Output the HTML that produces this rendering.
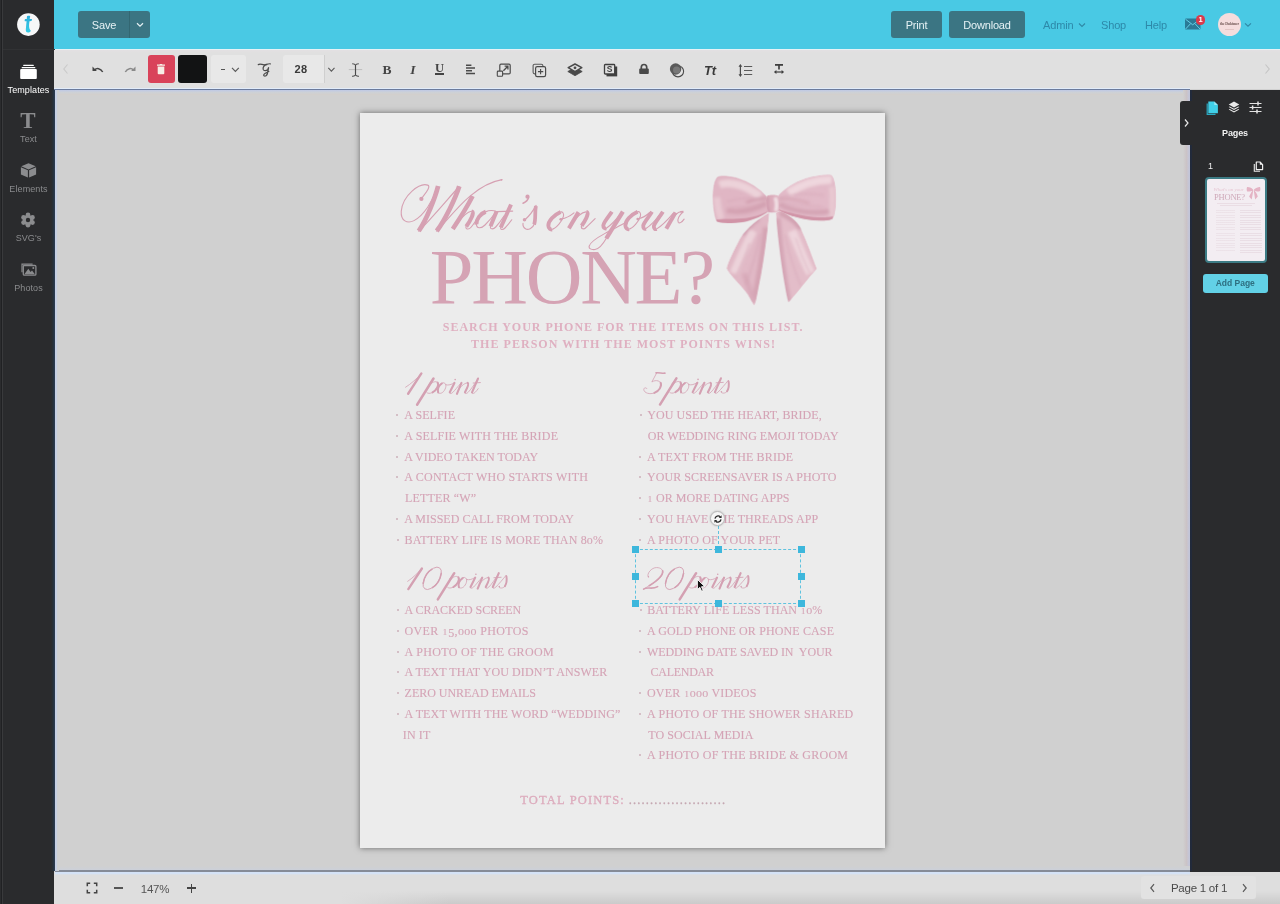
<!DOCTYPE html>
<html>
<head>
<meta charset="utf-8">
<title>Editor</title>
<style>
*{box-sizing:border-box;margin:0;padding:0}
html,body{width:1280px;height:904px;overflow:hidden;background:#d0d0d0;font-family:"Liberation Sans",sans-serif;}
.abs{position:absolute}
#side{position:absolute;left:0;top:0;width:54px;height:904px;background:#2a2b2d;}
#side .edge{position:absolute;left:0;top:0;width:4px;height:904px;background:linear-gradient(to right,#2b2c2e 1px,#202123 1px,#202123 2px,#3a3b3d 2px,#38393b 3px,#2a2b2d 3.500px)}
#side .sep{position:absolute;left:3px;top:49px;width:52px;height:1px;background:#313234}
.sitem{position:absolute;left:0;width:57px;text-align:center;font-size:9px;line-height:11px;color:#8a8b8d;letter-spacing:0.1px}
.sitem.on{color:#fff}
#top{position:absolute;left:54px;top:0;width:1226px;height:49px;background:#49c9e4}
#tool{position:absolute;left:54px;top:49px;width:1226px;height:40px;background:linear-gradient(#e6f2f5 1px,#e3e0e2 1px,#e0e0e0 4px)}
#toolline{position:absolute;left:54px;top:88px;width:1136px;height:2px;background:linear-gradient(#e2ecfa 1px,#6b7b9d 1px)}
#toolglow{position:absolute;left:55px;top:90px;width:1135px;height:6px;background:linear-gradient(#bfc9e5,#cdd1d6 40%,#d2cfcd 75%,#d0d0d0)}
#canvas{position:absolute;left:55px;top:90px;width:1135px;height:782px;background:#d0d0d0}
#leftline{position:absolute;left:51px;top:90px;width:8px;height:781px;background:linear-gradient(to right,#2a2b2d,#25303a 2px,#2b3d55 4px,#c5cfe3 4px,#c5cfe3 5.5px,#cdd0d2 6.500px,#d0d0d0 8px)}
#right{position:absolute;left:1190px;top:90px;width:90px;height:782px;background:#2a2b2d}
#rightline{position:absolute;left:1183px;top:90px;width:9px;height:781px;background:linear-gradient(to right,#d0d0d0,#cbc3c6 3.5px,#c4c6d8 6px,#c0c4da 7px,#212a3c 7px,#222a3a 8.5px,#2a2b2d 9px)}
#bottom{position:absolute;left:54px;top:872px;width:1226px;height:32px;background:#dedede}
#botline{position:absolute;left:55px;top:866px;width:1135px;height:6px;background:linear-gradient(#d0d0d0,#ccd0d9 4px,#858b97 4px,#858b97 5.5px,#aab3c4 6px)}
#botglow{position:absolute;left:55px;top:872px;width:1135px;height:3px;background:linear-gradient(#d4e2f6 1.5px,#dedede);z-index:2}
#side,#top,#tool,#right,#bottom,#page{will-change:transform}
#page{position:absolute;left:360px;top:113px;width:525px;height:735px;background:#ececec;box-shadow:0 0 6px rgba(0,0,0,.5)}
.btn{position:absolute;background:#3b7583;color:#e6f2f5;border-radius:3px;font-size:11px;text-align:center;letter-spacing:-.2px}
.nav{position:absolute;color:#2d89a9;font-size:11px;line-height:13px;letter-spacing:-.15px}
.t{position:absolute;white-space:pre;line-height:normal}
.li{font:12px "Liberation Serif",serif;color:#d5a4b6;-webkit-text-stroke:.12px #d5a4b6}
.sub{font:bold 12px "Liberation Serif",serif;color:#dfb0c1}
.big{font:78.500px "Liberation Serif",serif;color:#d5a3b4}
.sc{font:italic 27px "Liberation Serif",serif;color:#d7a2b4;transform:skewX(-14deg);transform-origin:0 75%}
.bu{position:absolute;width:2px;height:2px;background:#cdb0ba;border-radius:1px}
.hd{position:absolute;width:7px;height:7px;background:#3db7dc}
</style>
</head>
<body>
<div id="canvas"></div>
<div id="toolglow"></div>
<div id="page">
<!--LINES-START-->
<div class="t li" style="left:44.3px;top:295.3px;letter-spacing:0.051px">A SELFIE</div>
<i class="bu" style="left:36px;top:301px"></i>
<div class="t li" style="left:44.3px;top:316.0px;letter-spacing:0.188px">A SELFIE WITH THE BRIDE</div>
<i class="bu" style="left:36px;top:322px"></i>
<div class="t li" style="left:44.3px;top:336.7px;letter-spacing:-0.009px">A VIDEO TAKEN TODAY</div>
<i class="bu" style="left:36px;top:343px"></i>
<div class="t li" style="left:44.3px;top:357.4px;letter-spacing:0.236px">A CONTACT WHO STARTS WITH</div>
<i class="bu" style="left:36px;top:363px"></i>
<div class="t li" style="left:45.0px;top:378.1px;letter-spacing:0.151px">LETTER “W”</div>
<div class="t li" style="left:44.3px;top:398.8px;letter-spacing:0.010px">A MISSED CALL FROM TODAY</div>
<i class="bu" style="left:36px;top:405px"></i>
<div class="t li" style="left:44.6px;top:419.5px;letter-spacing:0.169px">BATTERY LIFE IS MORE THAN 8o%</div>
<i class="bu" style="left:37px;top:426px"></i>
<div class="t li" style="left:287.3px;top:295.3px;letter-spacing:0.063px">YOU USED THE HEART, BRIDE,</div>
<i class="bu" style="left:280px;top:301px"></i>
<div class="t li" style="left:287.8px;top:316.0px;letter-spacing:-0.004px">OR WEDDING RING EMOJI TODAY</div>
<div class="t li" style="left:287.0px;top:336.7px;letter-spacing:0.142px">A TEXT FROM THE BRIDE</div>
<i class="bu" style="left:279px;top:343px"></i>
<div class="t li" style="left:287.0px;top:357.4px;letter-spacing:0.069px">YOUR SCREENSAVER IS A PHOTO</div>
<i class="bu" style="left:279px;top:363px"></i>
<div class="t li" style="left:287.0px;top:378.1px;letter-spacing:0.023px"><span style="font-size:8.700px;padding:0 .85px">1</span> OR MORE DATING APPS</div>
<i class="bu" style="left:279px;top:384px"></i>
<div class="t li" style="left:287.0px;top:398.8px;letter-spacing:0.080px">YOU HAVE THE THREADS APP</div>
<i class="bu" style="left:279px;top:405px"></i>
<div class="t li" style="left:287.0px;top:419.5px;letter-spacing:0.170px">A PHOTO OF YOUR PET</div>
<i class="bu" style="left:279px;top:426px"></i>
<div class="t li" style="left:44.6px;top:490.3px;letter-spacing:-0.044px">A CRACKED SCREEN</div>
<i class="bu" style="left:37px;top:496px"></i>
<div class="t li" style="left:44.6px;top:511.0px;letter-spacing:0.328px">OVER <span style="font-size:8.700px;padding:0 .85px">1</span><span style="position:relative;top:2.200px">5</span>,ooo PHOTOS</div>
<i class="bu" style="left:37px;top:517px"></i>
<div class="t li" style="left:44.6px;top:531.7px;letter-spacing:0.320px">A PHOTO OF THE GROOM</div>
<i class="bu" style="left:37px;top:538px"></i>
<div class="t li" style="left:44.6px;top:552.4px;letter-spacing:0.092px">A TEXT THAT YOU DIDN’T ANSWER</div>
<i class="bu" style="left:37px;top:558px"></i>
<div class="t li" style="left:44.6px;top:573.1px;letter-spacing:-0.035px">ZERO UNREAD EMAILS</div>
<i class="bu" style="left:37px;top:579px"></i>
<div class="t li" style="left:44.6px;top:593.8px;letter-spacing:0.136px">A TEXT WITH THE WORD “WEDDING”</div>
<i class="bu" style="left:37px;top:600px"></i>
<div class="t li" style="left:42.8px;top:614.5px;letter-spacing:0.125px">IN IT</div>
<div class="t li" style="left:287.3px;top:490.3px;letter-spacing:0.066px">BATTERY LIFE LESS THAN <span style="font-size:8.700px;padding:0 .85px">1</span>o%</div>
<i class="bu" style="left:280px;top:496px"></i>
<div class="t li" style="left:287.0px;top:511.0px;letter-spacing:0.133px">A GOLD PHONE OR PHONE CASE</div>
<i class="bu" style="left:279px;top:517px"></i>
<div class="t li" style="left:287.0px;top:531.7px;letter-spacing:-0.079px">WEDDING DATE SAVED IN  YOUR</div>
<i class="bu" style="left:279px;top:538px"></i>
<div class="t li" style="left:290.6px;top:552.4px;letter-spacing:-0.292px">CALENDAR</div>
<div class="t li" style="left:287.0px;top:573.1px;letter-spacing:0.190px">OVER <span style="font-size:8.700px;padding:0 .85px">1</span>ooo VIDEOS</div>
<i class="bu" style="left:279px;top:579px"></i>
<div class="t li" style="left:287.0px;top:593.8px;letter-spacing:0.236px">A PHOTO OF THE SHOWER SHARED</div>
<i class="bu" style="left:279px;top:600px"></i>
<div class="t li" style="left:288.2px;top:614.5px;letter-spacing:0.079px">TO SOCIAL MEDIA</div>
<div class="t li" style="left:287.0px;top:635.2px;letter-spacing:0.250px">A PHOTO OF THE BRIDE &amp; GROOM</div>
<i class="bu" style="left:279px;top:641px"></i>
<div class="t sub" style="left:82.8px;top:206.7px;letter-spacing:0.979px">SEARCH YOUR PHONE FOR THE ITEMS ON THIS LIST.</div>
<div class="t sub" style="left:111.0px;top:223.8px;letter-spacing:1.041px">THE PERSON WITH THE MOST POINTS WINS!</div>
<div class="t sub" style="left:160.300px;top:680.100px;letter-spacing:1.160px;font:12.500px 'Liberation Serif',serif;-webkit-text-stroke:.35px #ddadbe;color:#ddadbe">TOTAL POINTS:</div>
<div class="t sub" style="left:268.800px;top:680.100px;letter-spacing:1.115px;font:12.500px 'Liberation Serif',serif;-webkit-text-stroke:.3px #c4a6b0;color:#c4a6b0">.......................</div>
<div class="t big" style="left:69.700px;top:118.800px;letter-spacing:-2.200px">PHONE?</div>
<!--LINES-END-->
<svg class="abs" id="ttl" style="left:35px;top:57px" width="300" height="90" viewBox="0 0 2400 720" fill="none" stroke="#d6a0b2" stroke-linecap="round" stroke-linejoin="round">
<circle cx="211" cy="231" r="17" fill="#d6a0b2" stroke="none"/>
<path d="M214 226C235 196 292 132 262 121C198 100 62 200 50 330C44 408 100 432 152 405C232 364 300 250 340 138" stroke-width="9"/>
<path d="M345 128C322 220 252 400 190 488" stroke-width="38" stroke-linecap="butt"/>
<path d="M190 490C300 380 430 222 512 134" stroke-width="9"/>
<path d="M514 130C482 230 400 400 334 488" stroke-width="38" stroke-linecap="butt"/>
<path d="M334 490C450 370 620 118 856 77" stroke-width="9"/>
<circle cx="852" cy="78" r="7" fill="#d6a0b2" stroke="none"/>
<path d="M621 208C580 290 510 400 462 472" stroke-width="36" stroke-linecap="butt"/>
<path d="M500 425C530 385 580 335 612 330" stroke-width="9"/>
<path d="M612 331C642 338 600 410 570 452" stroke-width="32" stroke-linecap="butt"/>
<path d="M568 448C562 478 590 480 610 456C630 432 650 400 668 378" stroke-width="9"/>
<path d="M726 334C684 348 648 395 651 436" stroke-width="32" stroke-linecap="butt"/>
<path d="M812 333C782 320 752 322 724 335M651 432C652 472 690 470 720 440C760 400 790 360 810 332" stroke-width="9"/>
<path d="M813 330L764 450" stroke-width="32" stroke-linecap="butt"/>
<path d="M764 446C757 476 785 478 806 456C830 430 850 402 872 368" stroke-width="9"/>
<path d="M928 276L846 460" stroke-width="32" stroke-linecap="butt"/>
<path d="M846 456C840 482 862 482 882 462C902 442 918 420 934 398" stroke-width="9"/>
<path d="M812 333L941 329" stroke-width="10"/>
<circle cx="1060" cy="213" r="17" fill="#d6a0b2" stroke="none"/>
<path d="M1068 222C1062 245 1042 258 1024 266" stroke-width="12"/>
<circle cx="1036" cy="398" r="14" fill="#d6a0b2" stroke="none"/>
<path d="M1038 400C1072 370 1106 325 1129 283" stroke-width="9"/>
<path d="M1127 288C1117 340 1128 398 1113 436" stroke-width="30" stroke-linecap="butt"/>
<path d="M1114 432C1102 470 1062 482 1044 470C1028 460 1022 442 1024 426" stroke-width="9"/>
<path d="M1325 336C1270 360 1225 410 1227 446C1228 470 1245 478 1256 475" stroke-width="31" stroke-linecap="butt"/>
<path d="M1254 476C1286 470 1340 410 1348 369C1352 345 1340 332 1324 336" stroke-width="9"/>
<circle cx="1326" cy="394" r="11" fill="#d6a0b2" stroke="none"/>
<path d="M1330 392C1370 385 1405 365 1432 343" stroke-width="9"/>
<path d="M1468 337L1391 467" stroke-width="32" stroke-linecap="butt"/>
<path d="M1420 425C1450 380 1495 340 1528 335" stroke-width="9"/>
<path d="M1530 335C1562 343 1512 420 1493 446" stroke-width="32" stroke-linecap="butt"/>
<path d="M1492 442C1485 476 1510 479 1530 458C1555 435 1580 410 1601 389" stroke-width="9"/>
<path d="M1735 334C1710 372 1670 416 1667 441C1665 462 1678 470 1690 467" stroke-width="31" stroke-linecap="butt"/>
<path d="M1688 468C1730 440 1775 390 1809 345" stroke-width="9"/>
<path d="M1823 333L1690 548" stroke-width="34" stroke-linecap="butt"/>
<path d="M1692 544C1660 600 1630 632 1600 636C1570 640 1548 628 1554 608C1562 580 1620 540 1677 509C1720 485 1760 468 1792 448C1812 438 1828 430 1840 424" stroke-width="9"/>
<path d="M1941 334C1886 358 1841 408 1843 444C1844 468 1861 476 1872 473" stroke-width="31" stroke-linecap="butt"/>
<path d="M1870 474C1902 468 1956 408 1964 367C1968 343 1956 330 1940 334" stroke-width="9"/>
<circle cx="1942" cy="392" r="11" fill="#d6a0b2" stroke="none"/>
<path d="M1946 390C1986 383 2015 362 2037 340" stroke-width="9"/>
<path d="M2056 334C2030 376 1990 420 1986 444C1984 466 1996 473 2007 469" stroke-width="31" stroke-linecap="butt"/>
<path d="M2005 470C2045 445 2095 390 2132 340" stroke-width="9"/>
<path d="M2143 334C2118 376 2075 425 2071 449C2069 470 2082 476 2093 472" stroke-width="31" stroke-linecap="butt"/>
<path d="M2091 473C2130 450 2185 395 2227 345" stroke-width="9"/>
<path d="M2244 340L2170 470" stroke-width="32" stroke-linecap="butt"/>
<path d="M2205 402C2230 370 2262 338 2284 334" stroke-width="9"/>
<path d="M2282 335L2308 334" stroke-width="15" stroke-linecap="butt"/>
<path d="M2302 338C2276 360 2254 396 2266 418C2275 432 2298 415 2313 393" stroke-width="9"/>
</svg>
<svg class="abs" id="bow" style="left:340px;top:47px;filter:saturate(.9) brightness(.985)" width="150" height="160" viewBox="0 0 848 904">
<defs>
<clipPath id="cLT"><path d="M388 298C340 325 262 385 225 445 190 515 160 570 150 612 165 648 215 690 268 758 285 785 298 810 306 822 318 805 326 740 345 650 362 560 378 440 392 300z"/></clipPath><clipPath id="cRT"><path d="M428 298C436 400 452 550 478 700 488 760 495 790 500 806 535 770 590 700 622 660 640 640 655 625 662 614 640 560 610 470 570 385 545 340 500 305 448 288z"/></clipPath>
<clipPath id="cLL"><path d="M378 205C340 160 280 120 205 97 160 88 118 84 100 92 80 105 72 150 70 200 70 260 78 320 92 348 120 362 190 358 250 350 310 338 360 312 388 290z"/></clipPath><clipPath id="cRL"><path d="M438 205C470 165 530 125 600 102 660 85 715 78 742 84 762 100 768 150 770 210 770 270 762 318 750 332 720 348 650 345 600 336 540 325 480 305 446 286z"/></clipPath><clipPath id="cKN"><path d="M375 205C385 195 430 192 442 204 450 230 452 265 446 290 432 300 398 300 384 294 374 270 370 230 375 205z"/></clipPath>
<filter id="bl" x="-20%" y="-20%" width="140%" height="140%"><feGaussianBlur stdDeviation="10"/></filter>
<filter id="bm" x="-20%" y="-20%" width="140%" height="140%"><feGaussianBlur stdDeviation="5"/></filter>
<filter id="bs" x="-5%" y="-5%" width="110%" height="110%"><feGaussianBlur stdDeviation="2.2"/></filter>
</defs>
<g filter="url(#bs)">
<g clip-path="url(#cLT)"><path d="M388 298C340 325 262 385 225 445 190 515 160 570 150 612 165 648 215 690 268 758 285 785 298 810 306 822 318 805 326 740 345 650 362 560 378 440 392 300z" fill="#e8bbc9"/><g filter="url(#bl)">
<path d="M300 400C255 490 215 580 190 640" stroke="#f3d6de" stroke-width="46" fill="none"/>
<path d="M372 380C355 520 330 680 305 800" stroke="#dba4b6" stroke-width="30" fill="none"/>
<path d="M330 330C300 350 270 380 240 420" stroke="#d79fb2" stroke-width="30" fill="none"/>
<path d="M250 640C270 700 290 760 305 810" stroke="#e0acbd" stroke-width="30" fill="none"/></g>
<g filter="url(#bm)" opacity=".55"><path d="M340 420C320 520 290 620 260 700M280 470C260 540 230 600 205 650" stroke="#d9a1b4" stroke-width="7" fill="none"/></g></g>
<g clip-path="url(#cRT)"><path d="M428 298C436 400 452 550 478 700 488 760 495 790 500 806 535 770 590 700 622 660 640 640 655 625 662 614 640 560 610 470 570 385 545 340 500 305 448 288z" fill="#eabfcc"/><g filter="url(#bl)">
<path d="M520 400C560 500 595 580 625 640" stroke="#f4d8e0" stroke-width="50" fill="none"/>
<path d="M440 330C452 500 476 680 500 800" stroke="#dca6b8" stroke-width="30" fill="none"/>
<path d="M450 300C500 320 540 350 570 390" stroke="#d9a2b4" stroke-width="26" fill="none"/></g>
<g filter="url(#bm)" opacity=".5"><path d="M480 420C505 540 540 640 570 710M540 440C565 520 595 590 620 640" stroke="#dba5b7" stroke-width="7" fill="none"/></g></g>
<g clip-path="url(#cLL)"><path d="M378 205C340 160 280 120 205 97 160 88 118 84 100 92 80 105 72 150 70 200 70 260 78 320 92 348 120 362 190 358 250 350 310 338 360 312 388 290z" fill="#e7b8c7"/><g filter="url(#bl)">
<path d="M110 140C170 115 260 145 340 205" stroke="#f3d5dd" stroke-width="44" fill="none"/>
<path d="M95 210C100 270 110 310 120 335" stroke="#efcbd5" stroke-width="40" fill="none"/>
<path d="M150 285C220 300 300 285 375 245" stroke="#dba3b5" stroke-width="30" fill="none"/>
<path d="M380 215C340 215 300 225 260 240" stroke="#d99fb2" stroke-width="16" fill="none"/></g>
<path d="M92 336C130 331 200 334 260 328 320 321 360 301 388 288L394 300C360 325 320 345 255 354 190 362 125 364 94 350z" fill="#d995aa"/>
<g filter="url(#bm)" opacity=".6"><path d="M370 225C300 210 220 215 150 235M370 250C310 262 240 270 170 268" stroke="#dca6b7" stroke-width="6" fill="none"/></g></g>
<g clip-path="url(#cRL)"><path d="M438 205C470 165 530 125 600 102 660 85 715 78 742 84 762 100 768 150 770 210 770 270 762 318 750 332 720 348 650 345 600 336 540 325 480 305 446 286z" fill="#e9bccb"/><g filter="url(#bl)">
<path d="M500 185C580 135 670 110 745 112" stroke="#f5dae1" stroke-width="46" fill="none"/>
<path d="M745 150C752 220 748 280 740 320" stroke="#eecad4" stroke-width="36" fill="none"/>
<path d="M450 250C520 290 640 305 730 290" stroke="#dca5b7" stroke-width="28" fill="none"/>
<path d="M445 220C500 215 560 225 620 245" stroke="#dfa9ba" stroke-width="16" fill="none"/></g>
<path d="M752 318C715 327 650 325 600 317 545 307 480 292 446 279L442 292C480 310 540 328 600 340 655 348 715 352 748 336z" fill="#d995aa"/>
<g filter="url(#bm)" opacity=".6"><path d="M450 215C530 190 620 185 700 200M455 245C540 250 620 262 690 265" stroke="#dda7b8" stroke-width="6" fill="none"/></g></g>
<g clip-path="url(#cKN)"><path d="M375 205C385 195 430 192 442 204 450 230 452 265 446 290 432 300 398 300 384 294 374 270 370 230 375 205z" fill="#e3adbe"/><g filter="url(#bm)"><path d="M425 210C436 240 436 265 428 290" stroke="#f7e4e9" stroke-width="22" fill="none"/><path d="M382 210C378 240 382 270 390 295" stroke="#d79cb0" stroke-width="12" fill="none"/></g></g>
</g>
</svg>
<svg class="abs" id="heads" style="left:0;top:0" width="525" height="735" viewBox="0 0 525 735" fill="none" stroke="#d4a0b2" stroke-linecap="round" stroke-linejoin="round">
<g transform="translate(73.50 265.50) scale(.078125)"><path d="M-155 -65L-325 195" stroke-width="30"/><path d="M-155 -65C-215 5-290 70-358 112" stroke-width="10"/><path d="M0 0L-210 336" stroke-width="32"/>
<path d="M-58 72C-36 46-15 20 0 0M-52 87C-22 47 28 27 53 52C73 82 38 152-22 182C-47 194-72 192-84 182" stroke-width="10"/>
<path d="M53 52C73 82 43 147-12 177" stroke-width="26"/>
<path d="M118 57C78 57 48 112 53 162C56 197 98 200 128 167C163 127 173 67 133 55C128 54 123 55 118 57M158 80C195 92 228 77 263 57" stroke-width="10"/>
<path d="M106 64C68 92 48 142 60 180" stroke-width="26"/>
<path d="M268 57L208 177" stroke-width="27"/>
<path d="M208 177C203 197 223 200 248 177C270 155 310 105 353 57" stroke-width="10"/>
<circle cx="277" cy="14" r="10" fill="#d4a0b2" stroke="none"/>
<path d="M358 57L300 197" stroke-width="27"/>
<path d="M323 142C358 87 408 52 438 57" stroke-width="10"/>
<path d="M438 57C453 67 438 112 403 177" stroke-width="27"/>
<path d="M403 177C398 197 418 200 443 177C478 142 518 82 560 20" stroke-width="10"/>
<path d="M570 0L493 177" stroke-width="27"/>
<path d="M508 58L600 52" stroke-width="11"/><path d="M493 177C488 197 508 200 533 177C548 162 560 148 572 130" stroke-width="10"/></g>
<g transform="translate(316.40 265.30) scale(.078125)"><path d="M-260 -70C-222 -78-182 -58-147 -66" stroke-width="21"/>
<path d="M-254 -66L-314 47C-262 12-192 32-192 87M-282 187C-342 212-412 187-417 147C-420 122-392 112-377 132" stroke-width="10"/>
<path d="M-202 57C-182 102-222 162-282 187" stroke-width="25"/><path d="M0 0L-210 336" stroke-width="32"/>
<path d="M-58 72C-36 46-15 20 0 0M-52 87C-22 47 28 27 53 52C73 82 38 152-22 182C-47 194-72 192-84 182" stroke-width="10"/>
<path d="M53 52C73 82 43 147-12 177" stroke-width="26"/>
<path d="M118 57C78 57 48 112 53 162C56 197 98 200 128 167C163 127 173 67 133 55C128 54 123 55 118 57M158 80C195 92 228 77 263 57" stroke-width="10"/>
<path d="M106 64C68 92 48 142 60 180" stroke-width="26"/>
<path d="M268 57L208 177" stroke-width="27"/>
<path d="M208 177C203 197 223 200 248 177C270 155 310 105 353 57" stroke-width="10"/>
<circle cx="277" cy="14" r="10" fill="#d4a0b2" stroke="none"/>
<path d="M358 57L300 197" stroke-width="27"/>
<path d="M323 142C358 87 408 52 438 57" stroke-width="10"/>
<path d="M438 57C453 67 438 112 403 177" stroke-width="27"/>
<path d="M403 177C398 197 418 200 443 177C478 142 518 82 560 20" stroke-width="10"/>
<path d="M570 0L493 177" stroke-width="27"/>
<path d="M508 58L600 52" stroke-width="11"/><path d="M493 177C488 197 508 200 533 177C568 142 628 72 666 24C670 36 670 40 668 42M648 167C628 197 583 197 570 177" stroke-width="10"/>
<path d="M668 42C676 87 666 137 648 167" stroke-width="25"/>
<circle cx="577" cy="171" r="9" fill="#d4a0b2" stroke="none"/></g>
<g transform="translate(94.25 460.20) scale(.078125)"><path d="M-414 -60L-588 204" stroke-width="30"/><path d="M-414 -60C-470 0-530 60-596 104" stroke-width="10"/><ellipse cx="0" cy="0" rx="86" ry="164" transform="translate(-282 66) rotate(35)" stroke-width="11"/>
<path d="M-70 -95C-96 -40-96 40-58 118" transform="translate(-282 66) rotate(35)" stroke-width="20"/><path d="M70 95C96 40 96 -40 58 -118" transform="translate(-282 66) rotate(35)" stroke-width="20"/><path d="M0 0L-210 336" stroke-width="32"/>
<path d="M-58 72C-36 46-15 20 0 0M-52 87C-22 47 28 27 53 52C73 82 38 152-22 182C-47 194-72 192-84 182" stroke-width="10"/>
<path d="M53 52C73 82 43 147-12 177" stroke-width="26"/>
<path d="M118 57C78 57 48 112 53 162C56 197 98 200 128 167C163 127 173 67 133 55C128 54 123 55 118 57M158 80C195 92 228 77 263 57" stroke-width="10"/>
<path d="M106 64C68 92 48 142 60 180" stroke-width="26"/>
<path d="M268 57L208 177" stroke-width="27"/>
<path d="M208 177C203 197 223 200 248 177C270 155 310 105 353 57" stroke-width="10"/>
<circle cx="277" cy="14" r="10" fill="#d4a0b2" stroke="none"/>
<path d="M358 57L300 197" stroke-width="27"/>
<path d="M323 142C358 87 408 52 438 57" stroke-width="10"/>
<path d="M438 57C453 67 438 112 403 177" stroke-width="27"/>
<path d="M403 177C398 197 418 200 443 177C478 142 518 82 560 20" stroke-width="10"/>
<path d="M570 0L493 177" stroke-width="27"/>
<path d="M508 58L600 52" stroke-width="11"/><path d="M493 177C488 197 508 200 533 177C568 142 628 72 666 24C670 36 670 40 668 42M648 167C628 197 583 197 570 177" stroke-width="10"/>
<path d="M668 42C676 87 666 137 648 167" stroke-width="25"/>
<circle cx="577" cy="171" r="9" fill="#d4a0b2" stroke="none"/></g>
<g transform="translate(336.10 460.20) scale(.078125)"><circle cx="-610" cy="46" r="9" fill="#d4a0b2" stroke="none"/>
<path d="M-612 48C-640 10-570 -75-504 -72C-450 -72-415 -40-430 10C-450 80-590 150-672 204" stroke-width="10"/>
<path d="M-428 -30C-420 40-520 110-600 160" stroke-width="22"/>
<path d="M-672 204C-620 168-570 215-492 172" stroke-width="20"/><ellipse cx="0" cy="0" rx="86" ry="164" transform="translate(-276 66) rotate(35)" stroke-width="11"/>
<path d="M-70 -95C-96 -40-96 40-58 118" transform="translate(-276 66) rotate(35)" stroke-width="20"/><path d="M70 95C96 40 96 -40 58 -118" transform="translate(-276 66) rotate(35)" stroke-width="20"/><path d="M0 0L-210 336" stroke-width="32"/>
<path d="M-58 72C-36 46-15 20 0 0M-52 87C-22 47 28 27 53 52C73 82 38 152-22 182C-47 194-72 192-84 182" stroke-width="10"/>
<path d="M53 52C73 82 43 147-12 177" stroke-width="26"/>
<path d="M118 57C78 57 48 112 53 162C56 197 98 200 128 167C163 127 173 67 133 55C128 54 123 55 118 57M158 80C195 92 228 77 263 57" stroke-width="10"/>
<path d="M106 64C68 92 48 142 60 180" stroke-width="26"/>
<path d="M268 57L208 177" stroke-width="27"/>
<path d="M208 177C203 197 223 200 248 177C270 155 310 105 353 57" stroke-width="10"/>
<circle cx="277" cy="14" r="10" fill="#d4a0b2" stroke="none"/>
<path d="M358 57L300 197" stroke-width="27"/>
<path d="M323 142C358 87 408 52 438 57" stroke-width="10"/>
<path d="M438 57C453 67 438 112 403 177" stroke-width="27"/>
<path d="M403 177C398 197 418 200 443 177C478 142 518 82 560 20" stroke-width="10"/>
<path d="M570 0L493 177" stroke-width="27"/>
<path d="M508 58L600 52" stroke-width="11"/><path d="M493 177C488 197 508 200 533 177C568 142 628 72 666 24C670 36 670 40 668 42M648 167C628 197 583 197 570 177" stroke-width="10"/>
<path d="M668 42C676 87 666 137 648 167" stroke-width="25"/>
<circle cx="577" cy="171" r="9" fill="#d4a0b2" stroke="none"/></g>
</svg>
<!--SEL-->
<div class="abs" style="left:275px;top:435.500px;width:166px;height:55px;border:1px dashed #5fc3df"></div>
<div class="abs" style="left:357.500px;top:413px;width:1px;height:23px;border-left:1px dashed #5fc3df"></div>
<i class="hd" style="left:272px;top:432.500px"></i><i class="hd" style="left:354.500px;top:432.500px"></i><i class="hd" style="left:437.500px;top:432.500px"></i>
<i class="hd" style="left:272px;top:459.500px"></i><i class="hd" style="left:437.500px;top:459.500px"></i>
<i class="hd" style="left:272px;top:486.500px"></i><i class="hd" style="left:354.500px;top:486.500px"></i><i class="hd" style="left:437.500px;top:486.500px"></i>
<div class="abs" style="left:350.300px;top:398.300px;width:15px;height:15px;border-radius:50%;background:#f7f7f7;border:1px solid #b9b9b9;box-shadow:0 0 2px rgba(0,0,0,.25)"></div>
<svg class="abs" style="left:352.800px;top:400.800px" width="10" height="10" viewBox="0 0 10 10"><path d="M2 4.600A3.100 3.100 0 0 1 7.300 2.800M8 5.400A3.100 3.100 0 0 1 2.700 7.200" fill="none" stroke="#2b2b2b" stroke-width="1.300"/><path d="M8.600 1.300V4.100H5.800zM1.400 8.700V5.900H4.200z" fill="#2b2b2b"/></svg>
<svg class="abs" style="left:336px;top:465px" width="11" height="14.700" viewBox="0 0 12 16"><path d="M1.500 1.500V12.700L4.200 10.200 6.100 14.500 7.900 13.700 6 9.500H9.700z" fill="#111" stroke="#fff" stroke-width="1" stroke-linejoin="round"/></svg>
</div>
<div id="top">
<div class="btn" style="left:24px;top:11px;width:72px;height:27px"><span class="abs" style="left:0;top:0;width:52px;line-height:29px">Save</span><span class="abs" style="left:51px;top:0;width:1px;height:27px;background:#336772"></span>
<svg class="abs" style="left:57px;top:11px" width="10" height="6" viewBox="0 0 10 6"><path d="M2 1.300 5 4.200 8 1.300" fill="none" stroke="#e6f1f4" stroke-width="1.200"/></svg></div>
<div class="btn" style="left:837px;top:11px;width:51px;height:27px;line-height:29px">Print</div>
<div class="btn" style="left:895px;top:11px;width:76px;height:27px;line-height:29px">Download</div>
<div class="nav" style="left:989px;top:19px">Admin</div>
<svg class="abs" style="left:1024px;top:22px" width="8" height="6" viewBox="0 0 8 6"><path d="M1 1.500 4 4.400 7 1.500" fill="none" stroke="#2f88a6" stroke-width="1.100"/></svg>
<div class="nav" style="left:1047px;top:19px">Shop</div>
<div class="nav" style="left:1091px;top:19px">Help</div>
<svg class="abs" style="left:1131px;top:18px" width="16" height="12" viewBox="0 0 16 12"><rect x="0" y="0.500" width="15.500" height="11" rx="1" fill="#2a7a96"/><path d="M0.500 1.200 7.700 6.800 15 1.200M0.600 11 5.600 5.600M15 11 9.900 5.600" fill="none" stroke="#63cfe6" stroke-width="1"/></svg>
<div class="abs" style="left:1142.300px;top:14.500px;width:8.500px;height:10.500px;border-radius:4.250px;background:#da3a4b;color:#fff;font:bold 7.500px/10.500px 'Liberation Sans',sans-serif;text-align:center">1</div>
<div class="abs" style="left:1164px;top:13px;width:23px;height:23px;border-radius:50%;background:#f5dddd"></div>
<div class="abs" style="left:1166px;top:22.300px;width:19px;text-align:center;font:bold 3.600px/5px 'Liberation Serif',serif;color:#6d5350;letter-spacing:-.1px;white-space:nowrap">the Dulcimer</div>
<div class="abs" style="left:1171px;top:28.600px;width:9px;height:.8px;background:#e3c6c5"></div>
<svg class="abs" style="left:1190px;top:22px" width="8" height="6" viewBox="0 0 8 6"><path d="M1 1.300 4 4.200 7 1.300" fill="none" stroke="#2f88a6" stroke-width="1.100"/></svg>
</div>
<div id="tool">
<svg class="abs" style="left:8px;top:14px" width="8" height="12" viewBox="0 0 8 12"><path d="M5.500 1.500 1.800 6 5.500 10.500" fill="none" stroke="#c9c9c9" stroke-width="1.100"/></svg>
<svg class="abs" style="left:37.500px;top:16.500px" width="12" height="8" viewBox="0 0 12 8"><path d="M.5 .6V5H4.900z" fill="#454545"/><path d="M2.400 4.300C4.500 1.700 8.600 1.900 10.700 6" fill="none" stroke="#454545" stroke-width="1.500"/></svg>
<svg class="abs" style="left:69.500px;top:16.500px" width="12" height="8" viewBox="0 0 12 8"><path d="M11.500 .6V5H7.100z" fill="#8a8a8a"/><path d="M9.600 4.300C7.500 1.700 3.400 1.900 1.300 6" fill="none" stroke="#8a8a8a" stroke-width="1.500"/></svg>
<div class="abs" style="left:93.500px;top:6px;width:27px;height:28px;border-radius:3px;background:#d9435a"></div>
<svg class="abs" style="left:102px;top:14px" width="10" height="12" viewBox="0 0 10 12"><path d="M1.700 3.600H8.300V10.300Q8.300 11.200 7.400 11.200H2.600Q1.700 11.200 1.700 10.300z" fill="#f7efe6"/><path d="M1 1.600H3.500L4 .9H6L6.500 1.600H9V2.800H1z" fill="#f7efe6"/></svg>
<div class="abs" style="left:124px;top:6px;width:28.500px;height:28px;border-radius:3px;background:#121314"></div>
<div class="abs" style="left:157px;top:6px;width:35px;height:28px;border-radius:3px;background:#e8e8e8"></div>
<div class="abs" style="left:166.500px;top:20px;width:4.500px;height:1.400px;background:#555"></div>
<svg class="abs" style="left:177px;top:18px" width="9" height="6" viewBox="0 0 9 6"><path d="M1 .9 4.400 4.300 7.800 .9" fill="none" stroke="#5a5a5a" stroke-width="1.200"/></svg>
<svg class="abs" style="left:203px;top:13px" width="15" height="16" viewBox="0 0 15 16"><path d="M1.300 2.600C3.500 1.200 5.500 3.300 8 2.700 9.700 2.300 11.500 1.500 13.300 1.800M9.800 2.600C7 3 5.700 5.500 6.200 7.400 6.800 9.300 9.500 9 10.800 7.300L11.600 5.700 10.400 11.500C10 13.600 8.200 14.700 7 13.800 6.300 13.100 7 11.800 8.300 11.200L11.800 9.500" fill="none" stroke="#4d4d4d" stroke-width="1.250" stroke-linecap="round" stroke-linejoin="round"/></svg>
<div class="abs" style="left:229px;top:6px;width:42px;height:28px;border-radius:3px 0 0 3px;background:#e8e8e8;border-right:1px solid #cfcfcf"></div>
<div class="abs" style="left:229px;top:6px;width:36px;height:28px;text-align:center;font:bold 11px/29px 'Liberation Sans',sans-serif;color:#3a3a3a;letter-spacing:.3px">28</div>
<svg class="abs" style="left:273px;top:18px" width="9" height="6" viewBox="0 0 9 6"><path d="M1.300 .9 4.400 4.100 7.500 .9" fill="none" stroke="#5a5a5a" stroke-width="1.100"/></svg>
<svg class="abs" style="left:294px;top:13px" width="15" height="16" viewBox="0 0 15 16"><path d="M0.800 7.600H14.200" stroke="#bdbdbd" stroke-width="1"/><path d="M4.200 1.700C5.800 1.700 7.100 2.100 7.500 3.100 7.900 2.100 9.200 1.700 10.800 1.700M4.200 14.300C5.800 14.300 7.100 13.900 7.500 12.900 7.900 13.900 9.200 14.300 10.800 14.300M7.500 3V13" fill="none" stroke="#4a4a4a" stroke-width="1.150"/></svg>
<div class="abs" style="left:327px;top:12px;width:12px;text-align:center;font:bold 13.500px/18px 'Liberation Serif',serif;color:#444">B</div>
<div class="abs" style="left:353px;top:12px;width:12px;text-align:center;font:italic bold 13.500px/18px 'Liberation Serif',serif;color:#444">I</div>
<div class="abs" style="left:379px;top:9.500px;width:13px;text-align:center;font:bold 12.500px/18px 'Liberation Serif',serif;color:#444">U</div>
<div class="abs" style="left:381px;top:24.300px;width:9px;height:1.600px;background:#444"></div>
<svg class="abs" style="left:411px;top:14px" width="11" height="12" viewBox="0 0 11 12"><path d="M1 2.200H6.400M1 4.950H10M1 7.700H7M1 10.450H10" stroke="#4a4a4a" stroke-width="1.500"/></svg>
<svg class="abs" style="left:442px;top:14px" width="16" height="15" viewBox="0 0 16 15"><rect x="3.800" y="1.200" width="10.400" height="9.700" rx="1.200" fill="none" stroke="#4a4a4a" stroke-width="1.200"/><rect x="1.300" y="8.100" width="5.300" height="5.200" rx=".8" fill="#e0e0e0" stroke="#4a4a4a" stroke-width="1.100"/><path d="M7.400 7.700 11.800 3.300M8.600 3.200H11.900V6.500" fill="none" stroke="#4a4a4a" stroke-width="1.300"/></svg>
<svg class="abs" style="left:478px;top:14px" width="15" height="15" viewBox="0 0 15 15"><rect x="1.100" y="1.200" width="9.800" height="9.700" rx="1.600" fill="none" stroke="#5a5a5a" stroke-width="1.100"/><rect x="3.600" y="3.700" width="10" height="9.900" rx="1.600" fill="#e0e0e0" stroke="#4a4a4a" stroke-width="1.200"/><path d="M8.600 6V11.300M5.950 8.650H11.250" stroke="#4a4a4a" stroke-width="1.100"/></svg>
<svg class="abs" style="left:513px;top:14px" width="16" height="15" viewBox="0 0 16 15"><path d="M8 4.600 15.200 8.500 8 12.700 0.800 8.500z" fill="#4a4a4a" stroke="#4a4a4a" stroke-width=".8" stroke-linejoin="round"/><path d="M8 1 14.800 4.700 8 8.700 1.200 4.700z" fill="#e0e0e0" stroke="#4a4a4a" stroke-width="1.500" stroke-linejoin="round"/><circle cx="8" cy="4.800" r="1.400" fill="#4a4a4a"/></svg>
<svg class="abs" style="left:549px;top:14px" width="16" height="15" viewBox="0 0 16 15"><path d="M3.500 3.500H14.200V13.400H3.500z" fill="#3f3f3f"/><rect x="1.500" y="1.500" width="10.200" height="9.500" rx=".8" fill="#e0e0e0" stroke="#3f3f3f" stroke-width="1.300"/><text x="6.600" y="9.300" text-anchor="middle" font-family="Liberation Sans, sans-serif" font-weight="bold" font-size="8.500" fill="#3f3f3f">S</text></svg>
<svg class="abs" style="left:584px;top:14px" width="12" height="12" viewBox="0 0 12 12"><path d="M3.300 6V4.200C3.300 2.500 4.500 1.500 6 1.500S8.700 2.500 8.700 4.200V6" fill="none" stroke="#4a4a4a" stroke-width="1.700"/><rect x="1.200" y="5.400" width="9.600" height="5.700" rx="1" fill="#4a4a4a"/></svg>
<svg class="abs" style="left:614px;top:13px" width="17" height="17" viewBox="0 0 17 17"><circle cx="10" cy="9.300" r="5.600" fill="#e4e4e4" stroke="#4a4a4a" stroke-width="1.100"/><circle cx="7.600" cy="7" r="5.700" fill="#5a5a5a"/><circle cx="8.600" cy="8" r="3.600" fill="#787878"/></svg>
<div class="abs" style="left:650px;top:13px;font:italic bold 13px/18px 'Liberation Sans',sans-serif;color:#3a3a3a;letter-spacing:-.3px">Tt</div>
<svg class="abs" style="left:683px;top:14px" width="17" height="15" viewBox="0 0 17 15"><path d="M3.400 2.500V12.500" stroke="#4a4a4a" stroke-width="1.200"/><path d="M1.500 3.700 3.400 .9 5.300 3.700zM1.500 11.300 3.400 14.100 5.300 11.300z" fill="#4a4a4a"/><path d="M7 3.500H15.200M7 7.500H15.200M7 11.500H15.200" stroke="#5a5a5a" stroke-width="1.200"/></svg>
<svg class="abs" style="left:719px;top:14px" width="12" height="12" viewBox="0 0 12 12"><path d="M2 1.900H10" stroke="#3f3f3f" stroke-width="1.800"/><path d="M6 2V6.400" stroke="#3f3f3f" stroke-width="1.700"/><path d="M2.200 9H9.800" stroke="#3f3f3f" stroke-width="1.200"/><path d="M3.400 6.900.9 9 3.400 11.100zM8.600 6.900 11.100 9 8.600 11.100z" fill="#3f3f3f"/></svg>
<svg class="abs" style="left:1209px;top:14px" width="8" height="12" viewBox="0 0 8 12"><path d="M2.500 1.500 6.200 6 2.500 10.500" fill="none" stroke="#c4c4c4" stroke-width="1.100"/></svg>
</div>
<div id="toolline"></div>
<div id="right">
<svg class="abs" style="left:16px;top:11px" width="13" height="14" viewBox="0 0 13 14"><path d="M1.200 2.500V13.300H9.500" fill="none" stroke="#2aa9c2" stroke-width="1.200"/><path d="M2.300 .5H8.300L11.900 4.100V12.300H2.300z" fill="#40d0e8"/><path d="M8.300 .5V4.100H11.900z" fill="#9be6f3"/></svg>
<svg class="abs" style="left:38px;top:11px" width="12" height="12" viewBox="0 0 12 12"><path d="M6 .6 11.300 3.500 6 6.400 .7 3.500z" fill="#e9e9e9"/><path d="M1.700 5.400.7 6 6 8.900 11.300 6 10.300 5.400 6 7.800zM1.700 7.900.7 8.500 6 11.400 11.300 8.500 10.300 7.900 6 10.300z" fill="#e9e9e9"/></svg>
<svg class="abs" style="left:59px;top:11px" width="13" height="13" viewBox="0 0 13 13"><path d="M.5 2.500H12.500M.5 6.500H12.500M.5 10.500H12.500" stroke="#e4e4e4" stroke-width="1.100"/><path d="M9 .6V4.400M3.600 4.600V8.400M8 8.600V12.400" stroke="#e4e4e4" stroke-width="1.500"/></svg>
<div class="abs" style="left:0;top:38px;width:90px;text-align:center;font:bold 9px/11px 'Liberation Sans',sans-serif;color:#f2f2f2;letter-spacing:-.1px">Pages</div>
<div class="abs" style="left:18px;top:71px;font:9px/10px 'Liberation Sans',sans-serif;color:#f0f0f0">1</div>
<svg class="abs" style="left:63px;top:71px" width="11" height="11" viewBox="0 0 11 11"><path d="M1.300 3V10.300H7" fill="none" stroke="#e8e8e8" stroke-width="1.100"/><path d="M3.300 1H7L9.600 3.600V8.600H3.300z" fill="none" stroke="#f0f0f0" stroke-width="1.200" stroke-linejoin="round"/><path d="M6.800 1V3.800H9.600" fill="#f0f0f0"/></svg>
<div class="abs" id="thumb" style="left:14.500px;top:86.500px;width:62px;height:86px;border:2px solid #3c7b84;border-radius:4px;background:#f3edf2;overflow:hidden">
<div class="abs" style="left:7px;top:8.500px;font:italic 5px/6px 'Liberation Serif',serif;color:#e6c5d1;white-space:pre">What's on your</div>
<div class="abs" style="left:7.500px;top:13px;font:8.500px/10px 'Liberation Serif',serif;color:#cfa9b9;letter-spacing:-.2px">PHONE?</div>
<svg class="abs" style="left:39px;top:7px" width="15" height="15" viewBox="0 0 15 15"><path d="M7 3.500C5 1.500 2 .8 1 1.200 .5 2.500.6 4.500 1.200 5.500 3 5.800 5.500 5.200 7.200 4.400zM8 3.500C10 1.500 13 .6 14 1 14.600 2.300 14.500 4.300 13.800 5.300 12 5.700 9.500 5 7.800 4.400zM6.800 4.600C5 6.500 3.800 9 3.200 10.800L5.700 13.600C6.300 10.500 6.800 7.500 7.200 4.800zM7.800 4.800C8.200 8 8.700 11 9.200 13.400L11.800 10.400C11 8 9.800 6 8.400 4.600z" fill="#e4b3c4"/></svg>
<div class="abs" style="left:10px;top:24px;width:38px;height:1px;background:#eadde4"></div><div class="abs" style="left:13px;top:26px;width:32px;height:1px;background:#eadde4"></div>
<div class="abs" style="left:9px;top:31px;width:19px;height:21px;background:repeating-linear-gradient(#e3d3db 0 1px,transparent 1px 2.400px);opacity:.4"></div>
<div class="abs" style="left:33px;top:31px;width:21px;height:21px;background:repeating-linear-gradient(#e0cfd8 0 1px,transparent 1px 2.400px);opacity:.5"></div>
<div class="abs" style="left:9px;top:54px;width:19px;height:18px;background:repeating-linear-gradient(#e3d3db 0 1px,transparent 1px 2.400px);opacity:.4"></div>
<div class="abs" style="left:33px;top:54px;width:22px;height:22px;background:repeating-linear-gradient(#e0cfd8 0 1px,transparent 1px 2.400px);opacity:.5"></div>
</div>
<div class="abs" style="left:12.500px;top:183.500px;width:65.500px;height:19px;border-radius:3px;background:#62d1e6;text-align:center;font:bold 8.500px/19px 'Liberation Sans',sans-serif;color:#2e6f80">Add Page</div>
</div>
<div id="rightline"></div>
<div class="abs" style="left:1180px;top:101px;width:12px;height:44px;background:#2a2b2d;border-radius:3px 0 0 3px"></div>
<svg class="abs" style="left:1183px;top:118px" width="7" height="10" viewBox="0 0 7 10"><path d="M2 1.500 5 5 2 8.500" fill="none" stroke="#e8e8e8" stroke-width="1.200"/></svg>
<div id="botline"></div><div id="botglow"></div>
<div id="bottom">
<div class="abs" style="left:286px;top:19px;width:940px;height:13px;background:linear-gradient(to right,rgba(222,222,222,1),rgba(222,222,222,0) 110px),linear-gradient(rgba(0,0,0,0),rgba(0,0,0,.09))"></div>
<div class="abs" style="left:1087px;top:4px;width:115px;height:23px;background:#e2e2e2;border-radius:3px"></div>
<svg class="abs" style="left:32px;top:10px" width="12" height="12" viewBox="0 0 12 12"><path d="M1.300 4.200V1.300H4.200M7.800 1.300H10.700V4.200M10.700 7.800V10.700H7.800M4.200 10.700H1.300V7.800" fill="none" stroke="#444" stroke-width="1.500"/></svg>
<div class="abs" style="left:60px;top:15.300px;width:9px;height:1.300px;background:#555"></div>
<div class="abs" style="left:80px;top:9.600px;width:42px;text-align:center;font:11.500px/14px 'Liberation Sans',sans-serif;color:#555;letter-spacing:-.2px">147%</div>
<div class="abs" style="left:133px;top:15.300px;width:9px;height:1.300px;background:#444"></div><div class="abs" style="left:136.850px;top:11.500px;width:1.300px;height:9px;background:#444"></div>
<svg class="abs" style="left:1095px;top:11px" width="7" height="10" viewBox="0 0 7 10"><path d="M5 1.200 1.800 5 5 8.800" fill="none" stroke="#5a5a5a" stroke-width="1.200"/></svg>
<div class="abs" style="left:1110px;top:9.400px;width:70px;text-align:center;font:11.500px/14px 'Liberation Sans',sans-serif;color:#4a4a4a;letter-spacing:-.25px">Page 1 of 1</div>
<svg class="abs" style="left:1187px;top:11px" width="7" height="10" viewBox="0 0 7 10"><path d="M2 1.200 5.200 5 2 8.800" fill="none" stroke="#5a5a5a" stroke-width="1.200"/></svg>
</div>
<div id="side"><div class="edge"></div><div class="sep"></div>
<svg class="abs" style="left:17px;top:13px" width="23" height="23" viewBox="0 0 23 23"><defs><linearGradient id="lg" x1="0" y1="0" x2="0" y2="1"><stop offset="0" stop-color="#2caedb"/><stop offset="1" stop-color="#36cde6"/></linearGradient></defs><circle cx="11.400" cy="11.600" r="11.300" fill="#f6f7f8"/><path d="M10 3.300C10.900 2.800 12.600 2.700 13.200 3.200L12.700 6 14.900 6C15.100 6.700 14.800 7.700 14.300 8.100L12.500 8.200C12.100 10.500 11.900 13 12.300 15 12.600 16.400 13.500 17.100 13.800 17.800 13.600 18.900 12.400 19.600 11 19.600 9.300 19.600 8.700 18.300 8.800 16.800 8.900 13.800 9.400 11 9.600 8.300L7.800 8.200C7.500 7.500 7.700 6.600 8.100 6.100L9.800 6C9.900 5 9.800 4 10 3.300z" fill="url(#lg)"/></svg>
<svg class="abs" style="left:20px;top:64px" width="17" height="16" viewBox="0 0 17 16"><rect x="3.200" y="0.800" width="10.600" height="1.300" rx=".4" fill="#fff"/><rect x="1.700" y="2.900" width="13.600" height="1.400" rx=".4" fill="#fff"/><rect x="0.200" y="5.100" width="16.600" height="10" rx="1" fill="#fff"/></svg>
<div class="sitem on" style="top:84.8px">Templates</div>
<div class="abs" style="left:0;width:56px;top:108px;text-align:center;font:bold 23px/26px 'Liberation Serif',serif;color:#8b8c8e">T</div>
<div class="sitem" style="top:133.8px">Text</div>
<svg class="abs" style="left:20px;top:163px" width="17" height="15" viewBox="0 0 17 15"><path d="M8.500 0.300 15.700 3.300 8.500 6.400 1.300 3.300z" fill="#8b8c8e"/><path d="M0.900 4.300 7.900 7.300V14.600L0.900 11.400z" fill="#8b8c8e"/><path d="M16.100 4.300 9.100 7.300V14.600L16.100 11.400z" fill="#8b8c8e"/></svg>
<div class="sitem" style="top:183.8px">Elements</div>
<svg class="abs" style="left:20px;top:212px" width="16" height="16" viewBox="-8 -8 16 16"><g fill="#8b8c8e"><circle r="5.300"/><circle cx="0" cy="-5.200" r="2.300"/><circle cx="4.500" cy="-2.600" r="2.300"/><circle cx="4.500" cy="2.600" r="2.300"/><circle cx="0" cy="5.200" r="2.300"/><circle cx="-4.500" cy="2.600" r="2.300"/><circle cx="-4.500" cy="-2.600" r="2.300"/></g><circle r="2.200" fill="#2a2b2d"/></svg>
<div class="sitem" style="top:232.8px">SVG's</div>
<svg class="abs" style="left:20px;top:262px" width="17" height="15" viewBox="0 0 17 15"><path d="M1.400 1.600h11.200v1.200H2.600v7.400H1.400z" fill="#8b8c8e"/><rect x="3.300" y="3.500" width="12.600" height="9.700" rx="1" fill="none" stroke="#8b8c8e" stroke-width="1.300"/><path d="M4.400 12.300 8.300 6.800 10.600 10 12 8.600 14.900 12.300z" fill="#8b8c8e"/><circle cx="13.300" cy="6" r="1" fill="#8b8c8e"/></svg>
<div class="sitem" style="top:282.8px">Photos</div>
</div>
<div id="leftline"></div>
</body>
</html>
